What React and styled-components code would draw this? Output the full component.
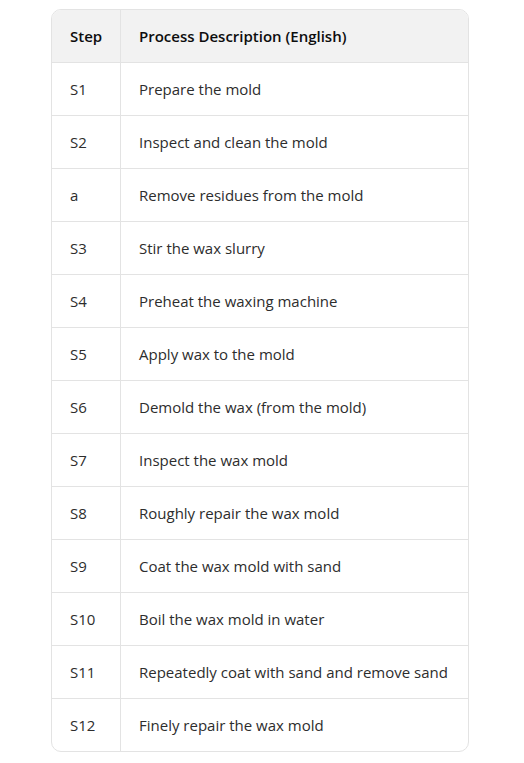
import React from "react";
import styled, { createGlobalStyle } from "styled-components";

const Global = createGlobalStyle`
  html, body { margin: 0; padding: 0; background: #fff; }
  body { font-family: "Open Sans", "Noto Sans", sans-serif; }
`;

const Page = styled.div`
  padding: 9px 55px 12px 51px;
`;

const Wrap = styled.div`
  border: 1px solid #e3e3e3;
  border-radius: 10px;
  overflow: hidden;
  width: 416px;
`;

const Table = styled.table`
  border-collapse: collapse;
  width: 100%;
  font-size: 15px;
  color: #2d2d2d;
`;

const Th = styled.th`
  background: #f2f2f2;
  text-align: left;
  font-weight: 600;
  color: #0d0d0d;
  height: 52px;
  padding: 0 0 0 18px;
  border-bottom: 1px solid #e3e3e3;
  border-left: ${(p) => (p.$first ? "none" : "1px solid #e3e3e3")};
  width: ${(p) => (p.$first ? "50px" : "auto")};
`;

const Td = styled.td`
  height: 52px;
  padding: 0 0 0 18px;
  border-top: 1px solid #e3e3e3;
  border-left: ${(p) => (p.$first ? "none" : "1px solid #e3e3e3")};
  white-space: nowrap;
`;

const rows = [
  ["S1", "Prepare the mold"],
  ["S2", "Inspect and clean the mold"],
  ["a", "Remove residues from the mold"],
  ["S3", "Stir the wax slurry"],
  ["S4", "Preheat the waxing machine"],
  ["S5", "Apply wax to the mold"],
  ["S6", "Demold the wax (from the mold)"],
  ["S7", "Inspect the wax mold"],
  ["S8", "Roughly repair the wax mold"],
  ["S9", "Coat the wax mold with sand"],
  ["S10", "Boil the wax mold in water"],
  ["S11", "Repeatedly coat with sand and remove sand"],
  ["S12", "Finely repair the wax mold"],
];

export default function App() {
  return (
    <>
      <Global />
      <Page>
        <Wrap>
          <Table>
            <thead>
              <tr>
                <Th $first>Step</Th>
                <Th>Process Description (English)</Th>
              </tr>
            </thead>
            <tbody>
              {rows.map(([s, d]) => (
                <tr key={s}>
                  <Td $first>{s}</Td>
                  <Td>{d}</Td>
                </tr>
              ))}
            </tbody>
          </Table>
        </Wrap>
      </Page>
    </>
  );
}
